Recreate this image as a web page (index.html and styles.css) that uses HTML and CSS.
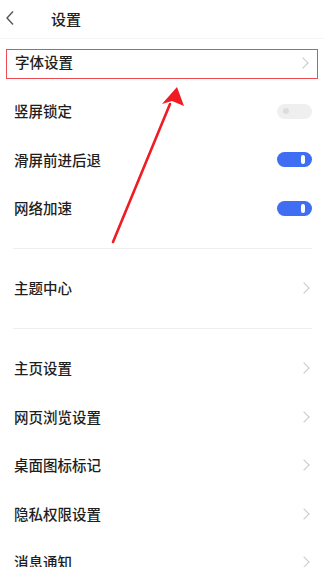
FILE: index.html
```html
<!DOCTYPE html>
<html lang="zh">
<head>
<meta charset="utf-8">
<link rel="stylesheet" href="styles.css">
</head>
<body>
<div class="page">
  <header class="topbar">
    <svg class="back" width="10" height="16" viewBox="0 0 10 16"><path d="M8 1.5 L2 8 L8 14.5" fill="none" stroke="#555" stroke-width="1.4"/></svg>
    <span class="title">设置</span>
  </header>

  <div class="group">
    <div class="row highlight"><span class="label">字体设置</span><span class="chev"></span></div>
    <div class="row"><span class="label">竖屏锁定</span><span class="toggle off"><i></i></span></div>
    <div class="row"><span class="label">滑屏前进后退</span><span class="toggle on"><i></i></span></div>
    <div class="row"><span class="label">网络加速</span><span class="toggle on"><i></i></span></div>
  </div>
  <div class="divider"></div>
  <div class="group">
    <div class="row"><span class="label">主题中心</span><span class="chev"></span></div>
  </div>
  <div class="divider"></div>
  <div class="group">
    <div class="row"><span class="label">主页设置</span><span class="chev"></span></div>
    <div class="row"><span class="label">网页浏览设置</span><span class="chev"></span></div>
    <div class="row"><span class="label">桌面图标标记</span><span class="chev"></span></div>
    <div class="row"><span class="label">隐私权限设置</span><span class="chev"></span></div>
    <div class="row"><span class="label">消息通知</span><span class="chev"></span></div>
  </div>

  <svg class="arrow" width="324" height="567" viewBox="0 0 324 567">
    <line x1="113" y1="242" x2="170" y2="104" stroke="#f01c24" stroke-width="2.6" stroke-linecap="round"/>
    <polygon points="177,87 184,106 172,101 162,104" fill="#f01c24"/>
  </svg>
</div>
</body>
</html>
```

FILE: styles.css
```css
* { box-sizing: border-box; }
html, body { margin: 0; padding: 0; background: #fff; }
body {
  font-family: "Noto Sans CJK SC", "Noto Sans", sans-serif;
  color: #222;
  overflow: hidden;
}
.page { position: relative; width: 324px; height: 567px; overflow: hidden; }
.topbar {
  height: 39px;
  display: flex;
  align-items: center;
  padding-left: 5px;
  padding-bottom: 2px;
  border-bottom: 1px solid #f6f6f6;
}
.back { display: block; }
.title {
  margin-left: 36px;
  font-size: 15px;
  font-weight: 500;
  color: #222;
}
.group { display: flex; flex-direction: column; }
.row {
  height: 48.5px;
  display: flex;
  align-items: center;
  justify-content: space-between;
  padding: 0 12px 2px 14px;
}
.label { font-size: 14.5px; line-height: 1; font-weight: 500; color: #1e1e1e; }
.highlight {
  margin: 9.5px 6px 9.5px 6px;
  height: 30px;
  padding: 0 6px 2px 8px;
  border: 1.5px solid #ee4a52;
}
.chev {
  width: 8px; height: 8px;
  border-top: 1.2px solid #c9c9c9;
  border-right: 1.2px solid #c9c9c9;
  transform: rotate(45deg);
  margin-right: 4px;
}
.toggle {
  position: relative;
  width: 35px;
  height: 15px;
  border-radius: 8px;
  display: flex;
  align-items: center;
}
.toggle.on { background: #3f6df4; justify-content: flex-end; padding-right: 7px; }
.toggle.on i { display: block; width: 4px; height: 9px; border-radius: 2px; background: #fff; }
.toggle.off { background: #efefef; padding-left: 6px; }
.toggle.off i { display: block; width: 6px; height: 6px; border-radius: 50%; background: #dcdcdc; }
.divider {
  margin: 14px 12px 16.5px 13px;
  height: 1px;
  background: #efefef;
}
.arrow { position: absolute; left: 0; top: 0; pointer-events: none; }
```
